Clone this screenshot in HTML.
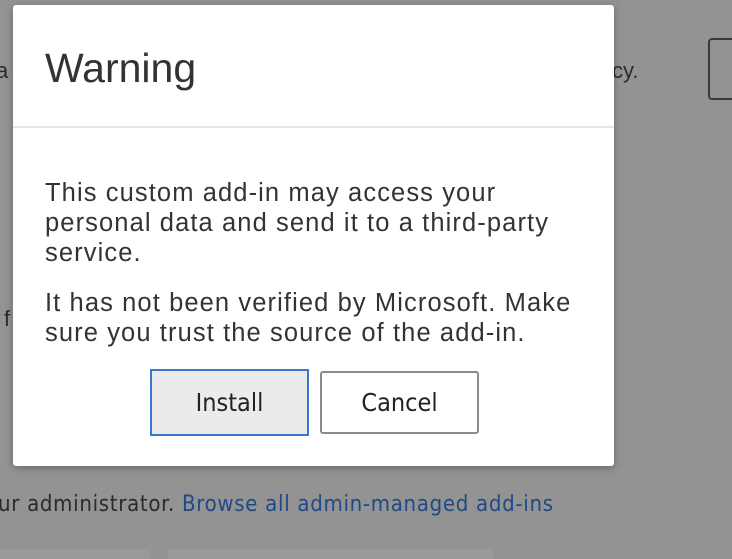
<!DOCTYPE html>
<html><head><meta charset="utf-8"><style>
html,body{margin:0;padding:0;}
body{width:732px;height:554px;background:#939393;position:relative;overflow:hidden;font-family:"Liberation Sans",sans-serif;color:#2a2a2a;}
.bg{position:absolute;font-size:22px;color:#2b2b2b;}
.dlg{position:absolute;left:13px;top:5px;width:601px;height:461px;background:#fff;border-radius:3px;box-shadow:0 2px 8px rgba(0,0,0,.3);}
.title{position:absolute;left:32px;top:40px;font-size:41px;color:#333;line-height:46px;}
.div{position:absolute;left:0;right:0;top:121px;height:2px;background:#e5e5e5;}
.body{position:absolute;left:32px;top:173px;font-size:25.5px;letter-spacing:1.1px;line-height:30px;color:#333;width:560px;white-space:nowrap;}
.body p{margin:0 0 20px 0;}
.btn{position:absolute;box-sizing:border-box;font-size:25px;text-align:center;color:#222;font-family:"DejaVu Sans Condensed","Liberation Sans",sans-serif;}
.b1{left:137px;top:364px;width:159px;height:67px;background:#ebebeb;border:2px solid #3a78d0;line-height:63px;}
.b2{left:307px;top:366px;width:159px;height:63px;background:#fff;border:2px solid #8a8a8a;border-radius:3px;line-height:59px;}
</style></head><body>
<div class="bg" style="left:-4px;top:58px;">a</div>
<div class="bg" style="left:612px;top:58px;">cy.</div>
<div style="position:absolute;left:708px;top:38px;width:40px;height:62px;border:2px solid #3a3a3a;border-radius:4px;box-sizing:border-box;"></div>
<div class="bg" style="left:4px;top:306px;">f</div>
<div class="bg" style="left:-2px;top:492px;font-family:'DejaVu Sans Condensed','Liberation Sans',sans-serif;font-size:22px;letter-spacing:0.7px;">ur administrator. <span style="color:#1f4a86">Browse all admin-managed add-ins</span></div>
<div style="position:absolute;left:0;top:549px;width:150px;height:10px;background:#999;"></div>
<div style="position:absolute;left:168px;top:549px;width:325px;height:10px;background:#999;"></div>
<div class="dlg">
<div class="title">Warning</div>
<div class="div"></div>
<div class="body"><p>This custom add-in may access your<br>personal data and send it to a third-party<br>service.</p><p>It has not been verified by Microsoft. Make<br>sure you trust the source of the add-in.</p></div>
<div class="btn b1">Install</div>
<div class="btn b2">Cancel</div>
</div>
</body></html>
